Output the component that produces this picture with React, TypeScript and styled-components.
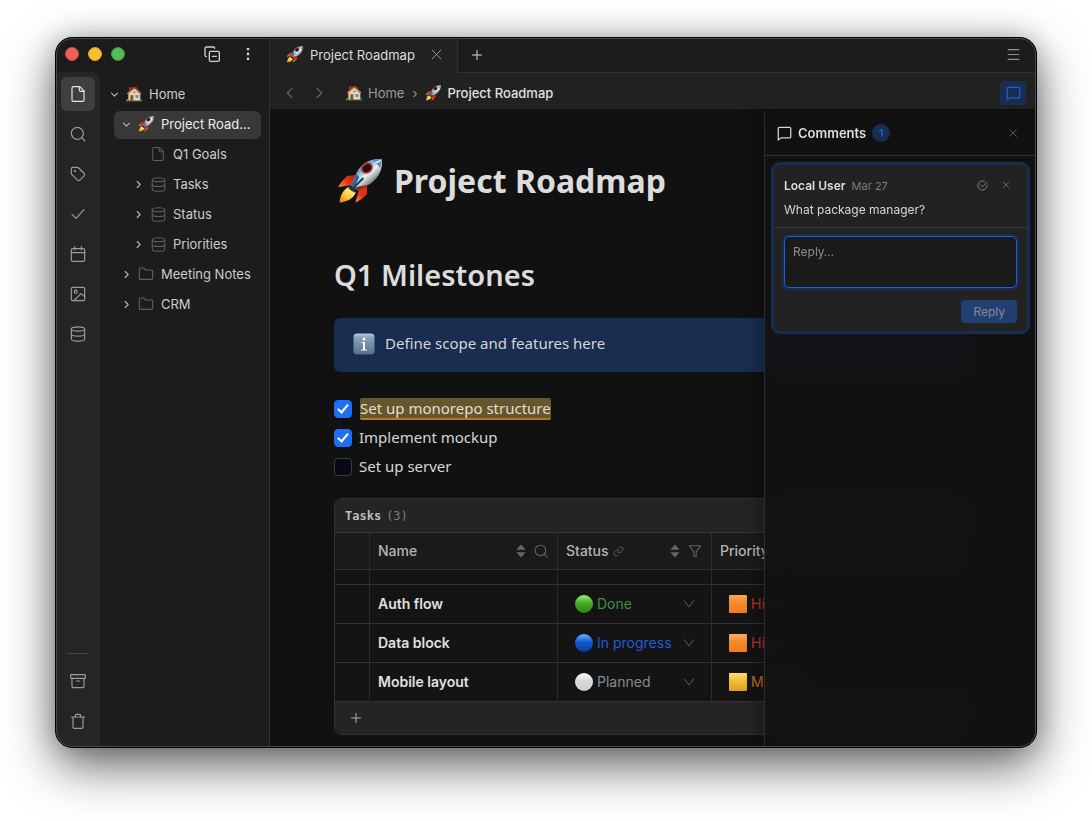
import React, { useId } from "react";
import styled, { createGlobalStyle, css } from "styled-components";

const ui = `Inter, "Liberation Sans", sans-serif`;
const prose = `"Noto Sans", "Liberation Sans", sans-serif`;

const c = {
  rail: "#252525",
  side: "#1c1c1c",
  bar: "#212121",
  page: "#111111",
  line: "#323232",
  text: "#d6d6d6",
  muted: "#9a9a9a",
  faint: "#666666",
  blue: "#1d5fd6",
  blueDeep: "#192d50",
};

const GlobalStyle = createGlobalStyle`
  *, *::before, *::after { box-sizing: border-box; }
  body { margin: 0; background: #fff; font-family: ${ui}; font-size: 13px; color: ${c.text}; }
  button, input, select, textarea { font: inherit; color: inherit; }
  h1, h2, p, ul { margin: 0; padding: 0; }
  ul { list-style: none; }
`;

/* ---------- line icons ---------- */

const Svg = styled.svg<{ $size: number; $weight: number }>`
  display: block;
  flex: none;
  width: ${(p) => p.$size}px;
  height: ${(p) => p.$size}px;
  fill: none;
  stroke: currentColor;
  stroke-width: ${(p) => p.$weight};
  stroke-linecap: round;
  stroke-linejoin: round;
`;

const glyphs = {
  file: (
    <>
      <path d="M14.500 1H5a2 2 0 0 0-2 2v18a2 2 0 0 0 2 2h14a2 2 0 0 0 2-2V7.500z" />
      <path d="M14 1v5a2 2 0 0 0 2 2h5" />
    </>
  ),
  search: (
    <>
      <circle cx="11" cy="11" r="9" />
      <path d="m22.500 22.500-5-5" />
    </>
  ),
  tag: (
    <>
      <path d="M12.600 2.600A2 2 0 0 0 11.200 2H4a2 2 0 0 0-2 2v7.200a2 2 0 0 0 .6 1.400l8.700 8.700a2.400 2.400 0 0 0 3.400 0l6.600-6.600a2.400 2.400 0 0 0 0-3.400z" />
      <circle cx="7.500" cy="7.500" r=".8" fill="currentColor" />
    </>
  ),
  check: <path d="M21 5.500 9 18.500l-6-6" />,
  calendar: (
    <>
      <path d="M7 1v5M17 1v5" />
      <rect x="2" y="4" width="20" height="19" rx="2" />
      <path d="M2 10h20" />
    </>
  ),
  image: (
    <>
      <rect x="2" y="2" width="20" height="20" rx="2" />
      <circle cx="8.500" cy="8.500" r="2.200" />
      <path d="M6 22 16.500 11.500l5.500 4.500" />
    </>
  ),
  database: (
    <>
      <ellipse cx="12" cy="4.500" rx="10" ry="3.200" />
      <path d="M2 4.500v15C2 21.300 6.500 22.800 12 22.800s10-1.500 10-3.300v-15" />
      <path d="M2 12c0 1.800 4.500 3.200 10 3.200s10-1.400 10-3.200" />
    </>
  ),
  archive: (
    <>
      <rect x="1" y="2.500" width="22" height="5.500" rx="1" />
      <path d="M3 8v12a2 2 0 0 0 2 2h14a2 2 0 0 0 2-2V8M9.500 12h5" />
    </>
  ),
  trash: (
    <>
      <path d="M2 6h20M4.500 6v15a2 2 0 0 0 2 2h11a2 2 0 0 0 2-2V6" />
      <path d="M8 6V3.500A1.500 1.500 0 0 1 9.500 2h5A1.500 1.500 0 0 1 16 3.500V6" />
    </>
  ),
  folder: (
    <path d="M20 20a2 2 0 0 0 2-2V8a2 2 0 0 0-2-2h-7.900a2 2 0 0 1-1.700-.9l-.8-1.200A2 2 0 0 0 7.900 3H4a2 2 0 0 0-2 2v13a2 2 0 0 0 2 2z" />
  ),
  collapse: (
    <>
      <rect x="8" y="8" width="15" height="15" rx="2" />
      <path d="M12.500 15.500h6M3.500 16a2 2 0 0 1-2-2V3.500a2 2 0 0 1 2-2H14a2 2 0 0 1 2 2" />
    </>
  ),
  dots: (
    <g fill="currentColor">
      <circle cx="12" cy="3.500" r="1.500" />
      <circle cx="12" cy="12" r="1.500" />
      <circle cx="12" cy="20.500" r="1.500" />
    </g>
  ),
  left: <path d="m15.500 4-8 8 8 8" />,
  right: <path d="m8.500 4 8 8-8 8" />,
  down: <path d="m4 8.500 8 8 8-8" />,
  pick: <path d="M4 6.500 12 17l8-10.500" />,
  close: <path d="M4 4l16 16M20 4 4 20" />,
  plus: <path d="M12 3v18M3 12h18" />,
  menu: <path d="M2 3h20M2 12h20M2 21h20" />,
  message: <path d="M22 17a2 2 0 0 1-2 2H6.500L2 22.500V4a2 2 0 0 1 2-2h16a2 2 0 0 1 2 2z" />,
  resolve: (
    <>
      <path d="M22 11a10 10 0 1 1-5.500-8" />
      <path d="m8 11 4 4L22 4.500" />
    </>
  ),
  sort: (
    <g fill="currentColor" stroke="none">
      <path d="M12 1 20 10H4zM12 23l8-9H4z" />
    </g>
  ),
  filter: <path d="M22 3H2l8 10v7.500l4 1.500V13z" />,
  link: (
    <>
      <path d="M10 14a5 5 0 0 0 7 0l4-4a5 5 0 0 0-7-7l-1.500 1.500" />
      <path d="M14 10a5 5 0 0 0-7 0l-4 4a5 5 0 0 0 7 7l1.500-1.500" />
    </>
  ),
};

type GlyphName = keyof typeof glyphs;

const Icon = ({ name, size = 16, weight = 1.75 }: { name: GlyphName; size?: number; weight?: number }) => (
  <Svg $size={size} $weight={weight} viewBox="0 0 24 24" aria-hidden="true">
    {glyphs[name]}
  </Svg>
);

/* ---------- colour pictograms ---------- */

const Picture = styled.svg<{ $size: number }>`
  display: block;
  flex: none;
  width: ${(p) => p.$size}px;
  height: ${(p) => p.$size}px;
`;

const Rocket = ({ size = 16 }: { size?: number }) => {
  const id = useId();
  return (
    <Picture $size={size} viewBox="18 13 132 132" aria-hidden="true">
      <defs>
        <linearGradient id={`${id}b`} x1="75" y1="35" x2="120" y2="88" gradientUnits="userSpaceOnUse">
          <stop offset="0" stopColor="#3d6ea8" />
          <stop offset=".3" stopColor="#86b3dd" />
          <stop offset=".55" stopColor="#eef1f2" />
          <stop offset=".8" stopColor="#a9adb0" />
          <stop offset="1" stopColor="#52616e" />
        </linearGradient>
        <linearGradient id={`${id}f`} x1="70" y1="65" x2="24" y2="95" gradientUnits="userSpaceOnUse">
          <stop offset="0" stopColor="#b81d0c" />
          <stop offset=".6" stopColor="#e8401a" />
          <stop offset="1" stopColor="#f79a35" />
        </linearGradient>
        <linearGradient id={`${id}g`} x1="102" y1="98" x2="76" y2="140" gradientUnits="userSpaceOnUse">
          <stop offset="0" stopColor="#d9260f" />
          <stop offset=".6" stopColor="#e23a17" />
          <stop offset="1" stopColor="#f7a035" />
        </linearGradient>
        <linearGradient id={`${id}y`} x1="62" y1="98" x2="28" y2="140" gradientUnits="userSpaceOnUse">
          <stop offset="0" stopColor="#fff3a0" />
          <stop offset=".5" stopColor="#fbcf3b" />
          <stop offset="1" stopColor="#ee7b1d" />
        </linearGradient>
      </defs>
      <path d="M74 61 47 65Q34 76 21 96L58 91z" fill={`url(#${id}f)`} />
      <path d="M104 92V117Q88 134 71 141L80 106z" fill={`url(#${id}g)`} />
      <path d="M54 95C38 102 27 119 25 141 46 138 64 131 72 112z" fill={`url(#${id}y)`} />
      <path d="M147 16C149 46 140 68 112 88L78 106 58 91 74 56C88 26 116 14 147 16z" fill={`url(#${id}b)`} />
      <path d="M147 16C132 15 124 17 119 20Q132 26 141 42 147 30 147 16z" fill="#5d8fc4" />
      <path d="M74 58 58 91 68 98 82 68z" fill="#39648f" />
      <path d="M68 98 78 106 112 88 84 94z" fill="#7d3026" />
      <path d="M92 72 60 104" stroke="#1e3e66" strokeWidth="6" strokeLinecap="round" />
      <path d="m56 92 18 15-6 6-18-14z" fill="#2a3238" />
      <ellipse cx="104" cy="42" rx="18" ry="15" transform="rotate(-35 104 42)" fill="#c92f23" />
      <ellipse cx="104" cy="42" rx="13" ry="10" transform="rotate(-35 104 42)" fill="#1b1314" />
      <path d="M130 26Q138 24 142 20" stroke="#e8f3fb" strokeWidth="4" fill="none" strokeLinecap="round" />
    </Picture>
  );
};

const House = ({ size = 16 }: { size?: number }) => (
  <Picture $size={size} viewBox="0 0 48 48" aria-hidden="true">
    <path d="M9 4h7v13H9z" fill="#9c3527" />
    <path d="M7 22 25 8l18 14v23H7z" fill="#ead0a4" />
    <path d="M7 43h36v3H7z" fill="#9d8460" />
    <path d="M19 3h13l13 19-3 3L25 9 7 25l-4-3z" fill="#8f3325" />
    <path d="M25 7 3 23l2 2L25 10l20 15 1-2z" fill="#e3c79a" />
    <path d="M13 28h9v17h-9z" fill="#8b5636" />
    <path d="M27 26h12v12H27z" fill="#fff" />
    <path d="M28 27h10v10H28z" fill="#4c9ad4" />
    <circle cx="25" cy="19" r="3.500" fill="#4b86b8" stroke="#fff" />
    <circle cx="4" cy="43" r="4" fill="#4e8a35" />
    <circle cx="45" cy="43" r="3.500" fill="#4e8a35" />
  </Picture>
);

const InfoBadge = () => {
  const id = useId();
  return (
    <Picture $size={22} viewBox="0 0 44 44" aria-hidden="true">
      <defs>
        <linearGradient id={id} x1="0" y1="0" x2="0" y2="1">
          <stop offset="0" stopColor="#b9cbd9" />
          <stop offset=".2" stopColor="#86a3bd" />
          <stop offset="1" stopColor="#566f85" />
        </linearGradient>
      </defs>
      <rect x="1" y="1" width="42" height="42" rx="7" fill={`url(#${id})`} />
      <circle cx="22" cy="12" r="3" fill="#fff" />
      <path d="M17 18h7v15h4v2H16v-2h4V20h-3z" fill="#fff" />
    </Picture>
  );
};

const tones = {
  green: ["#9bf56f", "#44ab28", "#35801f"],
  blue: ["#6fb0ff", "#1257d0", "#0a3d9c"],
  white: ["#ffffff", "#d9d9d9", "#cfcfcf"],
  orange: ["#fbac58", "#f28a29", "#ee7d20"],
  yellow: ["#ffe169", "#f2bd35", "#d8a026"],
};
type Tone = keyof typeof tones;

const Swatch = ({ tone, square }: { tone: Tone; square?: boolean }) => {
  const id = useId();
  const [a, b, d] = tones[tone];
  return (
    <Picture $size={18} viewBox="0 0 18 18" aria-hidden="true">
      <defs>
        <linearGradient id={id} x1="0" y1="0" x2="0" y2="1">
          <stop offset="0" stopColor={a} />
          <stop offset=".45" stopColor={b} />
          <stop offset="1" stopColor={d} />
        </linearGradient>
      </defs>
      {square ? (
        <rect width="18" height="18" rx="1" fill={`url(#${id})`} />
      ) : (
        <circle cx="9" cy="9" r="9" fill={`url(#${id})`} />
      )}
    </Picture>
  );
};

/* ---------- window shell ---------- */

const Stage = styled.div`
  min-height: 100vh;
  padding: 37px 55px 73px;
  display: flex;
  overflow: hidden;
`;

const AppWindow = styled.div`
  flex: 1;
  min-width: 0;
  position: relative;
  display: grid;
  grid-template-columns: 214px minmax(0, 1fr);
  border: 1px solid #000;
  border-radius: 17px;
  background: ${c.page};
  overflow: hidden;
  &::after {
    content: "";
    position: absolute;
    inset: 0;
    border: 1px solid #4a4a4a;
    border-radius: 16px;
    pointer-events: none;
    z-index: 5;
  }
`;

const Shadow = styled.div`
  flex: 1;
  min-width: 0;
  display: flex;
  border-radius: 17px;
  box-shadow: 0 18px 50px rgba(0, 0, 0, 0.6), 0 0 24px rgba(0, 0, 0, 0.2);
`;

const iconButton = css`
  display: grid;
  place-items: center;
  padding: 0;
  border: 0;
  background: none;
  flex: none;
`;

const IconButton = styled.button<{ $size?: number; $color?: string }>`
  ${iconButton}
  width: ${(p) => p.$size ?? 24}px;
  height: ${(p) => p.$size ?? 24}px;
  color: ${(p) => p.$color ?? c.muted};
`;

const Sidebar = styled.aside`
  display: flex;
  flex-direction: column;
  background: ${c.side};
  border-right: 1px solid ${c.line};
`;

const TitleBar = styled.div`
  height: 34px;
  display: flex;
  align-items: center;
  padding: 0 9px 2px;
`;

const Light = styled.button<{ $fill: string; $edge: string }>`
  width: 14px;
  height: 14px;
  padding: 0;
  margin-right: 9px;
  border: 1px solid ${(p) => p.$edge};
  border-radius: 50%;
  background: ${(p) => p.$fill};
`;

const TitleActions = styled.div`
  margin-left: auto;
  display: flex;
  gap: 12px;
`;

const SideBody = styled.div`
  flex: 1;
  display: flex;
`;

const Rail = styled.nav`
  width: 44px;
  padding: 5px 5px 9px;
  display: flex;
  flex-direction: column;
  gap: 6px;
  background: ${c.rail};
  border-top-right-radius: 8px;
`;

const RailButton = styled.button<{ $active?: boolean }>`
  ${iconButton}
  width: 34px;
  height: 34px;
  border-radius: 6px;
  color: ${(p) => (p.$active ? "#e6e6e6" : "#9c9c9c")};
  background: ${(p) => (p.$active ? "#3f3f3f" : "none")};
`;

const RailRule = styled.hr`
  width: 22px;
  height: 1px;
  margin: auto 6px 4px;
  border: 0;
  background: #424242;
`;

const Tree = styled.ul`
  flex: 1;
  min-width: 0;
  padding: 9px 8px 0 2px;
  display: flex;
  flex-direction: column;
  gap: 2px;
`;

const TreeRow = styled.li<{ $level: number; $active?: boolean }>`
  height: 28px;
  margin-left: ${(p) => p.$level * 12}px;
  padding: 0 7px 2px 6px;
  display: flex;
  align-items: center;
  gap: 6px;
  border-radius: 6px;
  background: ${(p) => (p.$active ? "#383838" : "none")};
  color: ${(p) => (p.$active ? "#ededed" : "#cccccc")};
`;

const Twisty = styled.button`
  ${iconButton}
  width: 12px;
  height: 12px;
  color: #b5b5b5;
`;

const TreeIcon = styled.span`
  width: 16px;
  display: grid;
  place-items: center;
  color: #5e5e5e;
  flex: none;
`;

const TreeLink = styled.a`
  min-width: 0;
  padding-left: 1px;
  color: inherit;
  text-decoration: none;
  font-size: 13px;
  line-height: 20px;
  white-space: nowrap;
  overflow: hidden;
  text-overflow: ellipsis;
`;

/* ---------- main column ---------- */

const Main = styled.main`
  min-width: 0;
  display: flex;
  flex-direction: column;
`;

const TabBar = styled.div`
  height: 35px;
  display: flex;
  background: ${c.side};
`;

const Tab = styled.div`
  display: flex;
  align-items: center;
  gap: 7px;
  padding: 0 8px 2px 16px;
  background: ${c.bar};
  border-right: 1px solid ${c.line};
`;

const TabLabel = styled.span`
  margin-right: 3px;
  font-size: 13px;
  line-height: 20px;
  color: #dddddd;
`;

const TabRest = styled.div`
  flex: 1;
  display: flex;
  align-items: center;
  justify-content: space-between;
  padding: 0 11px 1px 7px;
  border-bottom: 1px solid ${c.line};
`;

const CrumbBar = styled.div`
  height: 36px;
  padding: 4px 10px 0 8px;
  display: flex;
  align-items: center;
  background: ${c.bar};
`;

const NavButtons = styled.div`
  display: flex;
  gap: 5px;
  margin-right: 15px;
`;

const Crumbs = styled.nav`
  flex: 1;
  display: flex;
  align-items: center;
  gap: 8px;
  color: ${c.muted};
`;

const Crumb = styled.a<{ $current?: boolean }>`
  display: flex;
  align-items: center;
  gap: 6px;
  color: ${(p) => (p.$current ? "#e0e0e0" : c.muted)};
  font-weight: ${(p) => (p.$current ? 500 : 400)};
  text-decoration: none;
  line-height: 20px;
`;

const CommentToggle = styled.button`
  ${iconButton}
  width: 26px;
  height: 24px;
  border-radius: 4px;
  color: ${c.blue};
  background: ${c.blueDeep};
`;

const Body = styled.div`
  flex: 1;
  position: relative;
  overflow: hidden;
  background: ${c.page};
`;

const Doc = styled.article`
  padding: 44px 64px 12px;
  font-family: ${prose};
  font-size: 15px;
  line-height: 24px;
`;

const DocTitle = styled.h1`
  display: flex;
  align-items: center;
  gap: 11px;
  padding-left: 3px;
  font-size: 32px;
  line-height: 56px;
  font-weight: 700;
  color: #dcdcdc;
`;

const Heading = styled.h2`
  margin: 45px 0 22px;
  font-size: 29px;
  line-height: 42px;
  font-weight: 600;
  color: #dcdcdc;
`;

const Callout = styled.aside`
  height: 54px;
  padding: 15px 19px;
  display: flex;
  align-items: flex-start;
  gap: 10px;
  border-radius: 6px;
  background: ${c.blueDeep};
  line-height: 20px;
`;

const Todos = styled.ul`
  padding: 22px 0 17px;
`;

const Todo = styled.li`
  height: 29px;
`;

const TodoLabel = styled.label`
  display: flex;
  align-items: center;
  gap: 7px;
  height: 29px;
`;

const TodoText = styled.span`
  padding-bottom: 2px;
`;

const Checkbox = styled.input`
  appearance: none;
  flex: none;
  display: grid;
  place-items: start center;
  width: 18px;
  height: 18px;
  margin: 0;
  border: 1px solid #3d3d3d;
  border-radius: 4px;
  background: #070a14;
  &:checked {
    border-color: #1f6ff5;
    background: #1f6ff5;
  }
  &:checked::before {
    content: "";
    width: 6px;
    height: 11px;
    margin-top: 1px;
    border: solid #fff;
    border-width: 0 2px 2px 0;
    transform: rotate(40deg);
  }
`;

const Marked = styled.mark`
  margin-left: 1px;
  line-height: 20px;
  color: #e3dfd0;
  background: #64562d;
  border-bottom: 2px solid #bb7420;
  border-radius: 2px;
`;

/* ---------- task table ---------- */

const Block = styled.section`
  border: 1px solid ${c.line};
  border-radius: 8px;
  overflow: hidden;
  font-family: ${ui};
  background: #141414;
`;

const BlockHead = styled.header`
  height: 34px;
  padding: 0 10px;
  display: flex;
  align-items: center;
  gap: 5px;
  background: #242424;
  border-bottom: 1px solid #363636;
  font-family: "DejaVu Sans Mono", monospace;
  font-size: 12px;
  line-height: 16px;
  color: #7d7d7d;
  strong { color: #bdbdbd; }
`;

const Table = styled.table`
  width: 100%;
  table-layout: fixed;
  border-collapse: separate;
  border-spacing: 0;
  th, td {
    padding: 0 8px;
    border-right: 1px solid #2b2b2b;
    border-bottom: 1px solid ${c.line};
    text-align: left;
    vertical-align: middle;
  }
  th { height: 37px; background: #1a1a1a; font-weight: 500; font-size: 14px; color: #b4b4b4; }
  td { height: 39px; font-size: 14px; line-height: 20px; }
  th:last-child, td:last-child { border-right: 0; }
`;

const Spacer = styled.tr`
  td { height: 15px; }
`;

const HeadCell = styled.div`
  display: flex;
  align-items: center;
  gap: 4px;
  line-height: 20px;
  color: #b4b4b4;
`;

const HeadTools = styled.span`
  margin-left: auto;
  display: flex;
  gap: 4px;
`;

const Name = styled.td`
  font-weight: 600;
  color: #e0e0e0;
`;

const Choice = styled.div<{ $color: string }>`
  display: flex;
  align-items: center;
  gap: 4px;
  padding: 0 7px 0 9px;
  color: ${(p) => p.$color};
`;

const Select = styled.select`
  appearance: none;
  flex: 1;
  min-width: 0;
  padding: 0;
  border: 0;
  background: none;
  font-size: 14px;
  line-height: 20px;
`;

const Arrow = styled.span`
  color: #6a6a6a;
`;

const BlockFoot = styled.footer`
  height: 32px;
  padding: 0 9px;
  display: flex;
  align-items: center;
  background: #242424;
`;

/* ---------- comments ---------- */

const Panel = styled.aside`
  position: absolute;
  top: 2px;
  right: 0;
  bottom: 0;
  width: 272px;
  border-left: 1px solid #2c2c2c;
  background: rgba(17, 17, 17, 0.88);
  backdrop-filter: blur(14px);
  box-shadow: -4px 0 16px rgba(0, 0, 0, 0.3);
`;

const PanelHead = styled.header`
  height: 45px;
  padding: 0 12px;
  display: flex;
  align-items: center;
  gap: 6px;
  border-bottom: 1px solid ${c.line};
`;

const PanelTitle = styled.h2`
  font-size: 13px;
  line-height: 20px;
  font-weight: 600;
  color: #dedede;
`;

const Count = styled.span`
  width: 18px;
  height: 18px;
  border-radius: 50%;
  background: ${c.blueDeep};
  color: ${c.blue};
  font-size: 11px;
  line-height: 18px;
  font-weight: 600;
  text-align: center;
`;

const PushRight = styled.div`
  margin-left: auto;
  display: flex;
  gap: 2px;
`;

const Card = styled.article`
  margin: 8px 8px 0;
  border: 1px solid ${c.blueDeep};
  border-radius: 7px;
  background: #222222;
  box-shadow: 0 0 0 2px ${c.blueDeep};
`;

const Comment = styled.div`
  padding: 8px 10px 6px;
  border-bottom: 1px solid #3c3c3c;
`;

const Meta = styled.div`
  display: flex;
  align-items: center;
  gap: 6px;
  height: 24px;
  margin-bottom: 2px;
  strong { font-size: 12px; font-weight: 600; color: #dedede; }
  time { font-size: 11px; color: #7f7f7f; padding-top: 2px; }
`;

const CommentText = styled.p`
  font-size: 12px;
  line-height: 22px;
  color: #d6d6d6;
`;

const ReplyForm = styled.form`
  padding: 8px 10px;
  display: flex;
  flex-direction: column;
  align-items: flex-end;
  gap: 12px;
`;

const ReplyBox = styled.textarea`
  display: block;
  width: 100%;
  height: 52px;
  padding: 7px 8px;
  resize: none;
  outline: 0;
  border: 1px solid ${c.blue};
  border-radius: 5px;
  background: #1b1b1b;
  box-shadow: 0 0 0 2px ${c.blueDeep};
  font-size: 12px;
  line-height: 16px;
  &::placeholder { color: #8c8c8c; opacity: 1; }
`;

const ReplyButton = styled.button`
  height: 23px;
  padding: 0 12px;
  border: 0;
  border-radius: 4px;
  background: #213f73;
  color: #888888;
  font-size: 12px;
  line-height: 16px;
`;

/* ---------- data ---------- */

const railItems: { name: GlyphName; label: string }[] = [
  { name: "file", label: "Pages" },
  { name: "search", label: "Search" },
  { name: "tag", label: "Tags" },
  { name: "check", label: "To-dos" },
  { name: "calendar", label: "Calendar" },
  { name: "image", label: "Media" },
  { name: "database", label: "Databases" },
];

type Node = { label: string; level: number; icon: React.ReactNode; open?: boolean; leaf?: boolean; active?: boolean };

const db = <Icon name="database" size={15} />;
const folder = <Icon name="folder" size={16} />;

const tree: Node[] = [
  { label: "Home", level: 0, icon: <House />, open: true },
  { label: "Project Roadmap", level: 1, icon: <Rocket />, open: true, active: true },
  { label: "Q1 Goals", level: 2, icon: <Icon name="file" size={14} />, leaf: true },
  { label: "Tasks", level: 2, icon: db },
  { label: "Status", level: 2, icon: db },
  { label: "Priorities", level: 2, icon: db },
  { label: "Meeting Notes", level: 1, icon: folder },
  { label: "CRM", level: 1, icon: folder },
];

const todos = [
  { label: "Set up monorepo structure", done: true, marked: true },
  { label: "Implement mockup", done: true },
  { label: "Set up server", done: false },
];

type Task = { name: string; status: string; tone: Tone; color: string; priority: string; pTone: Tone; pColor: string };

const tasks: Task[] = [
  { name: "Auth flow", status: "Done", tone: "green", color: "#3c8f4a", priority: "High", pTone: "orange", pColor: "#bf2f27" },
  { name: "Data block", status: "In progress", tone: "blue", color: "#2259d8", priority: "High", pTone: "orange", pColor: "#bf2f27" },
  { name: "Mobile layout", status: "Planned", tone: "white", color: "#868a96", priority: "Medium", pTone: "yellow", pColor: "#c26a1c" },
];

const ChoiceCell = ({ label, value, color, children }: { label: string; value: string; color: string; children: React.ReactNode }) => (
  <Choice $color={color}>
    {children}
    <Select aria-label={label} defaultValue={value}>
      <option>{value}</option>
    </Select>
    <Arrow>
      <Icon name="pick" size={14} weight={1.5} />
    </Arrow>
  </Choice>
);

const TaskTable = () => (
  <Block>
    <BlockHead>
      <strong>Tasks</strong>
      <span>(3)</span>
    </BlockHead>
    <Table>
      <colgroup>
        <col width="35" />
        <col width="188" />
        <col width="154" />
        <col />
      </colgroup>
      <thead>
        <tr>
          <th aria-label="Select" />
          <th>
            <HeadCell>
              Name
              <HeadTools>
                <IconButton $size={16} $color={c.faint} aria-label="Sort by name">
                  <Icon name="sort" size={14} />
                </IconButton>
                <IconButton $size={16} $color={c.faint} aria-label="Search names">
                  <Icon name="search" size={14} />
                </IconButton>
              </HeadTools>
            </HeadCell>
          </th>
          <th>
            <HeadCell>
              Status
              <Arrow>
                <Icon name="link" size={11} />
              </Arrow>
              <HeadTools>
                <IconButton $size={16} $color={c.faint} aria-label="Sort by status">
                  <Icon name="sort" size={14} />
                </IconButton>
                <IconButton $size={16} $color={c.faint} aria-label="Filter by status">
                  <Icon name="filter" size={14} />
                </IconButton>
              </HeadTools>
            </HeadCell>
          </th>
          <th>
            <HeadCell>Priority</HeadCell>
          </th>
        </tr>
      </thead>
      <tbody>
        <Spacer aria-hidden="true">
          <td />
          <td />
          <td />
          <td />
        </Spacer>
        {tasks.map((t) => (
          <tr key={t.name}>
            <td />
            <Name>{t.name}</Name>
            <td>
              <ChoiceCell label={`Status of ${t.name}`} value={t.status} color={t.color}>
                <Swatch tone={t.tone} />
              </ChoiceCell>
            </td>
            <td>
              <ChoiceCell label={`Priority of ${t.name}`} value={t.priority} color={t.pColor}>
                <Swatch tone={t.pTone} square />
              </ChoiceCell>
            </td>
          </tr>
        ))}
      </tbody>
    </Table>
    <BlockFoot>
      <IconButton aria-label="Add task" $color="#b0b0b0">
        <Icon name="plus" size={12} weight={2} />
      </IconButton>
    </BlockFoot>
  </Block>
);

const CommentsPanel = () => (
  <Panel>
    <PanelHead>
      <Icon name="message" size={15} weight={2} />
      <PanelTitle>Comments</PanelTitle>
      <Count>1</Count>
      <PushRight>
        <IconButton $size={22} $color={c.faint} aria-label="Close comments">
          <Icon name="close" size={10} weight={2} />
        </IconButton>
      </PushRight>
    </PanelHead>
    <Card>
      <Comment>
        <Meta>
          <strong>Local User</strong>
          <time dateTime="03-27">Mar 27</time>
          <PushRight>
            <IconButton $size={22} $color="#858585" aria-label="Resolve">
              <Icon name="resolve" size={11} weight={2} />
            </IconButton>
            <IconButton $size={22} $color={c.faint} aria-label="Delete comment">
              <Icon name="close" size={8} weight={3} />
            </IconButton>
          </PushRight>
        </Meta>
        <CommentText>What package manager?</CommentText>
      </Comment>
      <ReplyForm onSubmit={(e) => e.preventDefault()}>
        <ReplyBox aria-label="Reply" placeholder="Reply…" />
        <ReplyButton type="submit">Reply</ReplyButton>
      </ReplyForm>
    </Card>
  </Panel>
);

export default function App() {
  return (
    <>
      <GlobalStyle />
      <Stage>
        <Shadow>
          <AppWindow>
            <Sidebar>
              <TitleBar>
                <Light $fill="#ee5f57" $edge="#d8493f" aria-label="Close" />
                <Light $fill="#f5bf30" $edge="#dca428" aria-label="Minimize" />
                <Light $fill="#58b957" $edge="#32a030" aria-label="Zoom" />
                <TitleActions>
                  <IconButton $color="#d0d0d0" aria-label="Collapse all">
                    <Icon name="collapse" weight={2} />
                  </IconButton>
                  <IconButton $color="#d0d0d0" aria-label="More">
                    <Icon name="dots" size={14} />
                  </IconButton>
                </TitleActions>
              </TitleBar>
              <SideBody>
                <Rail>
                  {railItems.map((r, i) => (
                    <RailButton key={r.name} aria-label={r.label} $active={i === 0}>
                      <Icon name={r.name} />
                    </RailButton>
                  ))}
                  <RailRule />
                  <RailButton aria-label="Archive">
                    <Icon name="archive" />
                  </RailButton>
                  <RailButton aria-label="Trash">
                    <Icon name="trash" />
                  </RailButton>
                </Rail>
                <Tree>
                  {tree.map((n) => (
                    <TreeRow key={n.label} $level={n.level} $active={n.active}>
                      {n.leaf ? (
                        <Twisty as="span" />
                      ) : (
                        <Twisty aria-label={`Toggle ${n.label}`}>
                          <Icon name={n.open ? "down" : "right"} size={9} weight={3} />
                        </Twisty>
                      )}
                      <TreeIcon>{n.icon}</TreeIcon>
                      <TreeLink href="#">{n.label}</TreeLink>
                    </TreeRow>
                  ))}
                </Tree>
              </SideBody>
            </Sidebar>
            <Main>
              <TabBar>
                <Tab>
                  <Rocket size={17} />
                  <TabLabel>Project Roadmap</TabLabel>
                  <IconButton aria-label="Close tab">
                    <Icon name="close" size={13} />
                  </IconButton>
                </Tab>
                <TabRest>
                  <IconButton $color="#d8d8d8" aria-label="New tab">
                    <Icon name="plus" size={12} weight={2} />
                  </IconButton>
                  <IconButton $color="#8f8f8f" aria-label="Menu">
                    <Icon name="menu" size={13} weight={2} />
                  </IconButton>
                </TabRest>
              </TabBar>
              <CrumbBar>
                <NavButtons>
                  <IconButton $color={c.faint} aria-label="Back">
                    <Icon name="left" size={14} weight={2} />
                  </IconButton>
                  <IconButton $color={c.faint} aria-label="Forward">
                    <Icon name="right" size={14} weight={2} />
                  </IconButton>
                </NavButtons>
                <Crumbs aria-label="Breadcrumb">
                  <Crumb href="#">
                    <House />
                    Home
                  </Crumb>
                  <span>›</span>
                  <Crumb href="#" $current>
                    <Rocket />
                    Project Roadmap
                  </Crumb>
                </Crumbs>
                <CommentToggle aria-label="Toggle comments">
                  <Icon name="message" size={15} weight={2} />
                </CommentToggle>
              </CrumbBar>
              <Body>
                <Doc>
                  <DocTitle>
                    <Rocket size={46} />
                    Project Roadmap
                  </DocTitle>
                  <Heading>Q1 Milestones</Heading>
                  <Callout>
                    <InfoBadge />
                    <p>Define scope and features here</p>
                  </Callout>
                  <Todos>
                    {todos.map((t) => (
                      <Todo key={t.label}>
                        <TodoLabel>
                          <Checkbox type="checkbox" defaultChecked={t.done} />
                          {t.marked ? <Marked>{t.label}</Marked> : <TodoText>{t.label}</TodoText>}
                        </TodoLabel>
                      </Todo>
                    ))}
                  </Todos>
                  <TaskTable />
                </Doc>
                <CommentsPanel />
              </Body>
            </Main>
          </AppWindow>
        </Shadow>
      </Stage>
    </>
  );
}
